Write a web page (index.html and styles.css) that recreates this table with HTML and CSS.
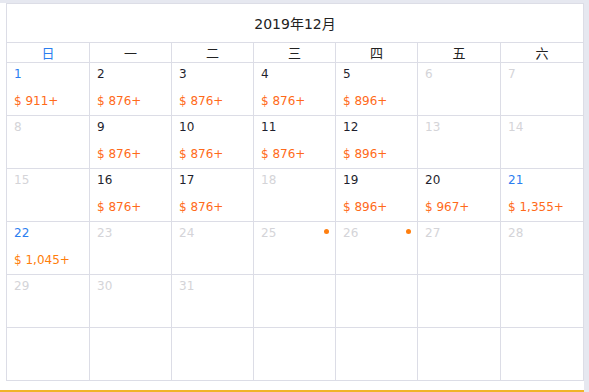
FILE: index.html
```html
<!DOCTYPE html>
<html lang="zh">
<head>
<meta charset="utf-8">
<link rel="stylesheet" href="styles.css">
</head>
<body>
<div class="frame">
  <div class="main">
    <div class="topstrip"></div>
    <div class="cal">
      <div class="title">2019年12月</div>
      <div class="grid">
        <div class="wd sun">日</div><div class="wd">一</div><div class="wd">二</div><div class="wd">三</div><div class="wd">四</div><div class="wd">五</div><div class="wd">六</div>

        <div class="day"><span class="num blue">1</span><span class="price">$ 911+</span></div>
        <div class="day"><span class="num">2</span><span class="price">$ 876+</span></div>
        <div class="day"><span class="num">3</span><span class="price">$ 876+</span></div>
        <div class="day"><span class="num">4</span><span class="price">$ 876+</span></div>
        <div class="day"><span class="num">5</span><span class="price">$ 896+</span></div>
        <div class="day"><span class="num off">6</span></div>
        <div class="day"><span class="num off">7</span></div>

        <div class="day"><span class="num off">8</span></div>
        <div class="day"><span class="num">9</span><span class="price">$ 876+</span></div>
        <div class="day"><span class="num">10</span><span class="price">$ 876+</span></div>
        <div class="day"><span class="num">11</span><span class="price">$ 876+</span></div>
        <div class="day"><span class="num">12</span><span class="price">$ 896+</span></div>
        <div class="day"><span class="num off">13</span></div>
        <div class="day"><span class="num off">14</span></div>

        <div class="day"><span class="num off">15</span></div>
        <div class="day"><span class="num">16</span><span class="price">$ 876+</span></div>
        <div class="day"><span class="num">17</span><span class="price">$ 876+</span></div>
        <div class="day"><span class="num off">18</span></div>
        <div class="day"><span class="num">19</span><span class="price">$ 896+</span></div>
        <div class="day"><span class="num">20</span><span class="price">$ 967+</span></div>
        <div class="day"><span class="num blue">21</span><span class="price">$ 1,355+</span></div>

        <div class="day"><span class="num blue">22</span><span class="price hi">$ 1,045+</span></div>
        <div class="day"><span class="num off">23</span></div>
        <div class="day"><span class="num off">24</span></div>
        <div class="day"><span class="num off">25</span><span class="dot"></span></div>
        <div class="day"><span class="num off">26</span><span class="dot"></span></div>
        <div class="day"><span class="num off">27</span></div>
        <div class="day"><span class="num off">28</span></div>

        <div class="day"><span class="num off">29</span></div>
        <div class="day"><span class="num off">30</span></div>
        <div class="day"><span class="num off">31</span></div>
        <div class="day"></div>
        <div class="day"></div>
        <div class="day"></div>
        <div class="day"></div>

        <div class="day"></div>
        <div class="day"></div>
        <div class="day"></div>
        <div class="day"></div>
        <div class="day"></div>
        <div class="day"></div>
        <div class="day"></div>
      </div>
    </div>
    <div class="spacer"></div>
    <div class="bottomline"></div>
  </div>
  <div class="side"></div>
</div>
</body>
</html>
```

FILE: styles.css
```css
html, body {
  margin: 0;
  padding: 0;
  background: #ffffff;
  font-family: "DejaVu Sans", Verdana, "Noto Sans CJK SC", sans-serif;
  font-size: 12px;
  color: #1f1f2e;
}
.frame {
  display: flex;
  width: 589px;
  height: 392px;
  overflow: hidden;
}
.main {
  width: 584px;
  display: flex;
  flex-direction: column;
}
.side {
  width: 5px;
  background: #e6e8f0;
}
.topstrip {
  height: 3px;
  background: #e6e8f0;
}
.cal {
  margin-left: 6px;
  width: 578px;
  box-sizing: border-box;
  border-left: 1px solid #dcdde6;
  border-top: 1px solid #dcdde6;
}
.title {
  height: 38px;
  border-right: 1px solid #dcdde6;
  border-bottom: 1px solid #dcdde6;
  display: flex;
  align-items: center;
  justify-content: center;
  font-size: 14px;
  color: #222;
  font-family: "DejaVu Sans", "Noto Sans CJK SC", sans-serif;
}
.grid {
  display: grid;
  grid-template-columns: 83px 82px 82px 82px 82px 83px 83px;
}
.wd {
  height: 19px;
  border-right: 1px solid #dcdde6;
  border-bottom: 1px solid #dcdde6;
  display: flex;
  align-items: center;
  justify-content: center;
  font-family: "Noto Sans CJK SC", sans-serif;
  font-size: 13px;
  color: #222;
}
.wd.sun { color: #2b7ef0; }
.day {
  position: relative;
  border-right: 1px solid #dcdde6;
  border-bottom: 1px solid #dcdde6;
  box-sizing: content-box;
  padding: 4px 0 0 7px;
  height: 48px;
  display: flex;
  flex-direction: column;
  gap: 13px;
  line-height: 14px;
}
.num { color: #1f1f2e; }
.num.blue { color: #2b7ef0; }
.num.off { color: #d4d4d8; }
.price { color: #ff6a1a; }
.price.hi { color: #ff7d0a; }
.dot {
  position: absolute;
  right: 6px;
  top: 7px;
  width: 5px;
  height: 5px;
  border-radius: 50%;
  background: #ff7f0f;
}
.spacer { flex: 1; }
.bottomline {
  height: 2px;
  background: #f0b429;
}
```
